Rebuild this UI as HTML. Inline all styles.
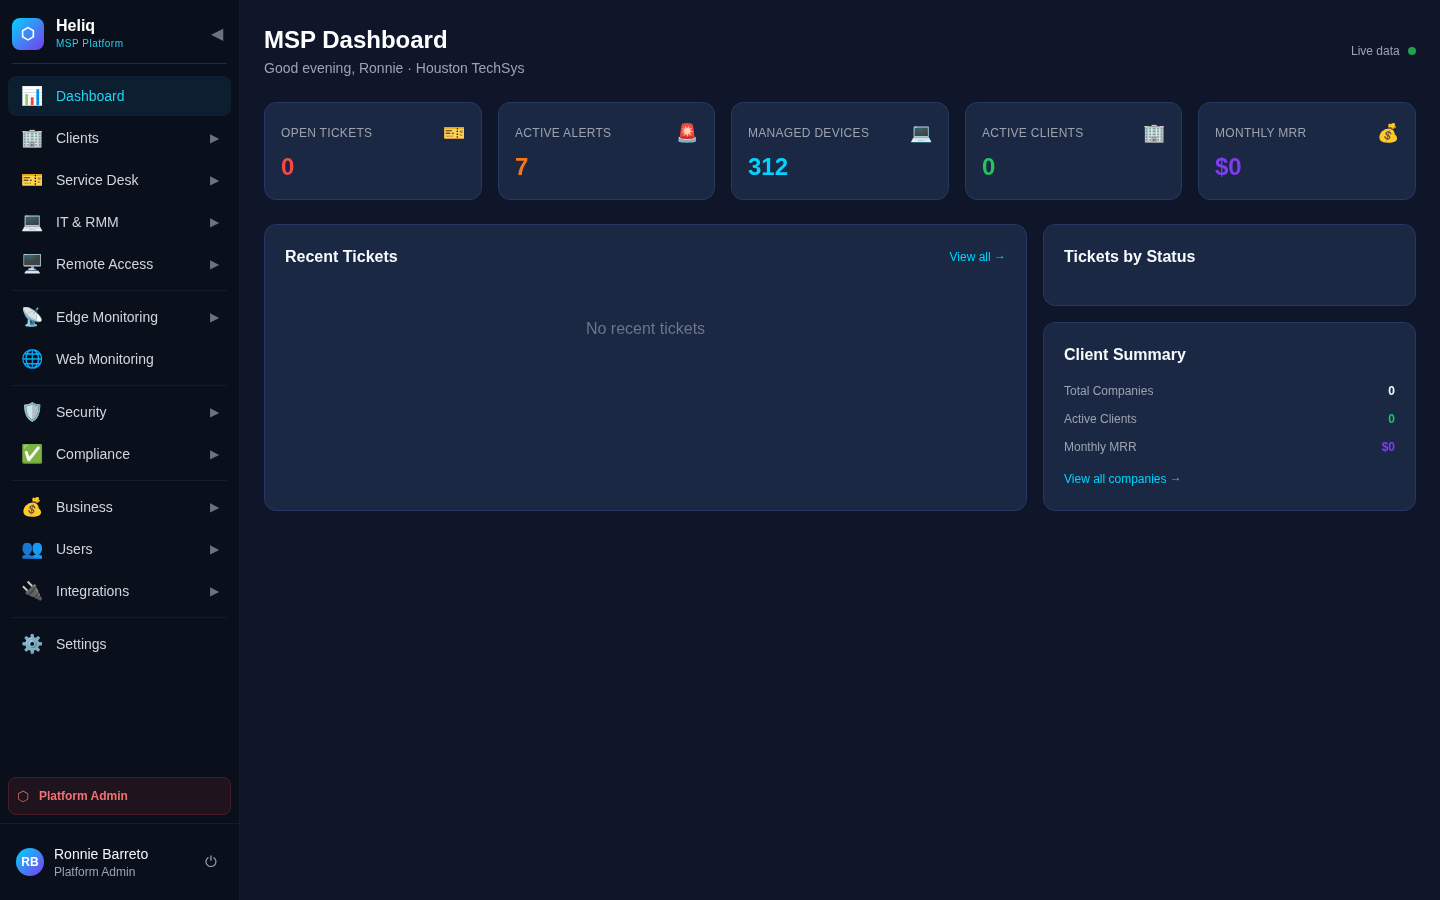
<!DOCTYPE html>
<html><head><meta charset="utf-8">
<style>
*{box-sizing:border-box;margin:0;padding:0}
html,body{width:1440px;height:900px;overflow:hidden}
.sb,.h1,.h2,.live,.card,.panel{will-change:transform}
body{font-family:"Liberation Sans",sans-serif;background:#0f1629;color:#e2e8f0;position:relative}
.sb{position:absolute;left:0;top:0;width:240px;height:900px;background:#0a0f1c;border-right:1px solid #161c2b}
.logo{position:absolute;left:12px;top:18px;width:32px;height:32px;border-radius:8px;background:linear-gradient(135deg,#00d4ff,#7c3aed);color:#fff;font-size:16px;font-weight:bold;line-height:32px;text-align:center}
.brand{position:absolute;left:56px;top:17px;font-size:16px;font-weight:bold;color:#fff}
.sub{position:absolute;left:56px;top:38px;font-size:10px;color:#22d3ee;letter-spacing:0.5px}
.collapse{position:absolute;left:211px;top:24px;font-size:16px;color:#6b7280}
.div1{position:absolute;left:12px;top:63px;width:215px;height:1px;background:#08374c}
.nav{position:absolute;left:8px;top:76px;width:223px}
.it{height:40px;border-radius:8px;display:flex;align-items:center;margin-bottom:2px;position:relative}
.it .ic{position:absolute;left:13px;top:10px;font-size:18px;line-height:20px;width:22px;text-align:center}
.it .tx{position:absolute;left:48px;top:12px;font-size:14px;color:#d1d5db}
.it .ar{position:absolute;left:202px;top:13px;font-size:12px;color:#6b7280}
.it.act{background:#0c1f30}
.it.act .tx{color:#22d3ee}
.sep{height:1px;background:#161c2a;margin:6px 4px 6px 4px}
.padmin{position:absolute;left:8px;top:777px;width:223px;height:38px;border:1px solid #4a1e28;background:#1f131d;border-radius:8px}
.padmin .hx{position:absolute;left:8px;top:10px;font-size:14px;color:#e06464}
.padmin .t{position:absolute;left:30px;top:11px;font-size:12px;font-weight:bold;color:#f07272}
.div2{position:absolute;left:0;top:823px;width:239px;height:1px;background:#161c2a}
.av{position:absolute;left:16px;top:848px;width:28px;height:28px;border-radius:50%;background:linear-gradient(135deg,#00d4ff,#7c3aed);color:#fff;font-size:12px;font-weight:bold;line-height:28px;text-align:center}
.un{position:absolute;left:54px;top:846px;font-size:14px;color:#f1f5f9}
.ur{position:absolute;left:54px;top:865px;font-size:12px;color:#9ca3af}
.pw{position:absolute;left:205px;top:853px;font-size:15px;color:#9ca3af}

.h1{position:absolute;left:264px;top:26px;font-size:24px;font-weight:bold;color:#fff}
.h2{position:absolute;left:264px;top:60px;font-size:14px;color:#9ca3af}
.live{position:absolute;left:1351px;top:44px;font-size:12px;color:#9ca3af}
.dot{position:absolute;left:1408px;top:47px;width:8px;height:8px;border-radius:50%;background:#21a150}
.card{position:absolute;top:102px;height:98px;background:#1a2844;border:1px solid #263862;border-radius:12px}
.card .lb{position:absolute;left:16px;top:23px;font-size:12px;color:#9ca3af;letter-spacing:0.3px}
.card .ic{position:absolute;right:16px;top:19px;font-size:18px}
.card .v{position:absolute;left:16px;top:50px;font-size:24px;font-weight:bold}
.panel{position:absolute;background:#1a2844;border:1px solid #263862;border-radius:12px}
.pt{position:absolute;left:20px;top:23px;font-size:16px;font-weight:bold;color:#f8fafc}
.va{position:absolute;right:20px;top:25px;font-size:12px;color:#00d4ff}
.arr{position:relative;top:-2px}
.empty{position:absolute;left:0;width:100%;text-align:center;top:95px;font-size:16px;color:#6e7585}
.row{position:absolute;left:20px;right:20px;font-size:12px;color:#9ca3af}
.row b{position:absolute;right:0;top:0;font-weight:bold}
.vac{position:absolute;left:20px;top:149px;font-size:12px;color:#00d4ff}
</style></head><body>
<div class="sb">
  <div class="logo">⬡</div>
  <div class="brand">Heliq</div>
  <div class="sub">MSP Platform</div>
  <div class="collapse">◀</div>
  <div class="div1"></div>
  <div class="nav">
    <div class="it act"><span class="ic">📊</span><span class="tx">Dashboard</span></div>
    <div class="it"><span class="ic">🏢</span><span class="tx">Clients</span><span class="ar">▶</span></div>
    <div class="it"><span class="ic">🎫</span><span class="tx">Service Desk</span><span class="ar">▶</span></div>
    <div class="it"><span class="ic">💻</span><span class="tx">IT &amp; RMM</span><span class="ar">▶</span></div>
    <div class="it"><span class="ic">🖥️</span><span class="tx">Remote Access</span><span class="ar">▶</span></div>
    <div class="sep"></div>
    <div class="it"><span class="ic">📡</span><span class="tx">Edge Monitoring</span><span class="ar">▶</span></div>
    <div class="it"><span class="ic">🌐</span><span class="tx">Web Monitoring</span></div>
    <div class="sep"></div>
    <div class="it"><span class="ic">🛡️</span><span class="tx">Security</span><span class="ar">▶</span></div>
    <div class="it"><span class="ic">✅</span><span class="tx">Compliance</span><span class="ar">▶</span></div>
    <div class="sep"></div>
    <div class="it"><span class="ic">💰</span><span class="tx">Business</span><span class="ar">▶</span></div>
    <div class="it"><span class="ic">👥</span><span class="tx">Users</span><span class="ar">▶</span></div>
    <div class="it"><span class="ic">🔌</span><span class="tx">Integrations</span><span class="ar">▶</span></div>
    <div class="sep"></div>
    <div class="it"><span class="ic">⚙️</span><span class="tx">Settings</span></div>
  </div>
  <div class="padmin"><span class="hx">⬡</span><span class="t">Platform Admin</span></div>
  <div class="div2"></div>
  <div class="av">RB</div>
  <div class="un">Ronnie Barreto</div>
  <div class="ur">Platform Admin</div>
  <div class="pw">⏻</div>
</div>

<div class="h1">MSP Dashboard</div>
<div class="h2">Good evening, Ronnie · Houston TechSys</div>
<div class="live">Live data</div>
<div class="dot"></div>

<div class="card" style="left:264px;width:218px"><span class="lb">OPEN TICKETS</span><span class="ic">🎫</span><span class="v" style="color:#fb4646">0</span></div>
<div class="card" style="left:498px;width:217px"><span class="lb">ACTIVE ALERTS</span><span class="ic">🚨</span><span class="v" style="color:#fb7617">7</span></div>
<div class="card" style="left:731px;width:218px"><span class="lb">MANAGED DEVICES</span><span class="ic">💻</span><span class="v" style="color:#00d4ff">312</span></div>
<div class="card" style="left:965px;width:217px"><span class="lb">ACTIVE CLIENTS</span><span class="ic">🏢</span><span class="v" style="color:#22c55e">0</span></div>
<div class="card" style="left:1198px;width:218px"><span class="lb">MONTHLY MRR</span><span class="ic">💰</span><span class="v" style="color:#7f3cf0">$0</span></div>

<div class="panel" style="left:264px;top:224px;width:763px;height:287px">
  <div class="pt">Recent Tickets</div>
  <div class="va">View all <span class="arr">→</span></div>
  <div class="empty">No recent tickets</div>
</div>
<div class="panel" style="left:1043px;top:224px;width:373px;height:82px">
  <div class="pt">Tickets by Status</div>
</div>
<div class="panel" style="left:1043px;top:322px;width:373px;height:189px">
  <div class="pt">Client Summary</div>
  <div class="row" style="top:61px">Total Companies<b style="color:#f8fafc">0</b></div>
  <div class="row" style="top:89px">Active Clients<b style="color:#22c55e">0</b></div>
  <div class="row" style="top:117px">Monthly MRR<b style="color:#7f3cf0">$0</b></div>
  <div class="vac">View all companies <span class="arr">→</span></div>
</div>
</body></html>
